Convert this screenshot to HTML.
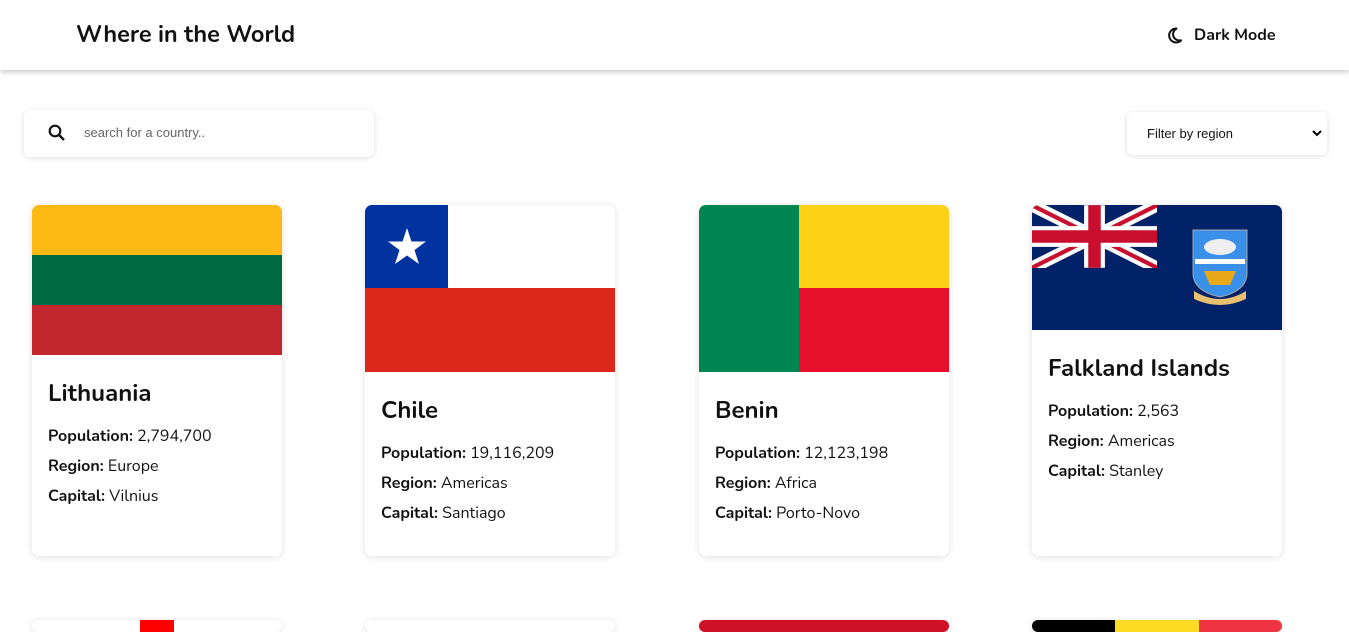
<!DOCTYPE html>
<html><head><meta charset="utf-8"><style>
*{box-sizing:border-box;margin:0;padding:0}
html,body{width:1349px;height:632px;overflow:hidden}
body{background:#fff;font-family:"Nunito","Liberation Sans",sans-serif;color:#111;position:relative}
header{position:absolute;left:0;top:0;width:1349px;height:70px;background:#fff;box-shadow:0 2px 5px rgba(0,0,0,.22);z-index:2}
h1{position:absolute;left:76px;top:19px;font-size:23.5px;font-weight:700;letter-spacing:0}
.dm{position:absolute;left:1168px;top:24px;font-size:16px;font-weight:700;display:flex;align-items:center}
.dm svg{margin-right:11px}
.search{position:absolute;left:24px;top:110px;width:350px;height:47px;border-radius:7px;box-shadow:0 1px 6px rgba(0,0,0,.13);background:#fff}
.search svg{position:absolute;left:24px;top:14px}
.search span{position:absolute;left:60px;top:15px;font-size:13px;color:#666;font-family:"Liberation Sans",sans-serif}
.filter{position:absolute;left:1127px;top:112px;width:200px;height:43px;border-radius:6px;box-shadow:0 1px 6px rgba(0,0,0,.13);background:#fff;font-family:"Liberation Sans",sans-serif;font-size:13px}
.filter span{position:absolute;left:20px;top:14px}
.filter svg{position:absolute;right:4px;top:16px}
.card{position:absolute;width:250px;height:351px;border-radius:7px;background:#fff;box-shadow:0 1px 7px rgba(0,0,0,.13);overflow:hidden}
.card.s{height:12px}
.flag{width:250px;position:relative}
.body{padding:24px 16px}
.body h2{font-size:24px;font-weight:700;margin-bottom:12px;line-height:30px}
.body p{font-size:16px;line-height:30px}
.body b{font-weight:700}
</style></head><body>
<header><h1>Where in the World</h1>
<div class="dm"><svg width="15" height="17" viewBox="0 0 15 17"><path d="M9 1.5A7 7 0 1 0 13.5 13 6 6 0 0 1 9 1.5Z" fill="none" stroke="#111" stroke-width="2"/></svg>Dark Mode</div></header>
<div class="search"><svg width="18" height="18" viewBox="0 0 18 18"><circle cx="7" cy="7" r="5.3" fill="none" stroke="#111" stroke-width="2.2"/><path d="M11 11L16 16" stroke="#111" stroke-width="2.4"/></svg><span>search for a country..</span></div>
<div class="filter"><span>Filter by region</span><svg width="12" height="10" viewBox="0 0 12 10"><path d="M2 3L6 7L10 3" fill="none" stroke="#000" stroke-width="2"/></svg></div>

<div class="card" style="left:32px;top:205px"><div class="flag" style="height:150px;background:linear-gradient(#FDB913 0 50px,#006A44 50px 100px,#C1272D 100px)"></div>
<div class="body"><h2>Lithuania</h2><p><b>Population:</b> 2,794,700</p><p><b>Region:</b> Europe</p><p><b>Capital:</b> Vilnius</p></div></div>

<div class="card" style="left:365px;top:205px"><div class="flag" style="height:167px;background:linear-gradient(#fff 0 83px,#DA291C 83px)"><div style="position:absolute;left:0;top:0;width:83px;height:83px;background:#0033A0"></div><svg style="position:absolute;left:21px;top:21px" width="42" height="42" viewBox="0 0 42 42"><polygon fill="#fff" points="21,2 25.5,15.5 40,15.5 28.5,24 33,38 21,29.5 9,38 13.5,24 2,15.5 16.5,15.5"/></svg></div>
<div class="body"><h2>Chile</h2><p><b>Population:</b> 19,116,209</p><p><b>Region:</b> Americas</p><p><b>Capital:</b> Santiago</p></div></div>

<div class="card" style="left:699px;top:205px"><div class="flag" style="height:167px;background:linear-gradient(#FCD116 0 83px,#E8112D 83px)"><div style="position:absolute;left:0;top:0;width:100px;height:167px;background:#008751"></div></div>
<div class="body"><h2>Benin</h2><p><b>Population:</b> 12,123,198</p><p><b>Region:</b> Africa</p><p><b>Capital:</b> Porto-Novo</p></div></div>

<div class="card" style="left:1032px;top:205px"><div class="flag" style="height:125px;background:#012169"><svg style="position:absolute;left:0;top:0" width="125" height="63" viewBox="0 0 60 30"><path d="M0,0L60,30M60,0L0,30" stroke="#fff" stroke-width="6"/><path d="M0,0L60,30M60,0L0,30" stroke="#C8102E" stroke-width="2"/><path d="M30,0V30M0,15H60" stroke="#fff" stroke-width="10"/><path d="M30,0V30M0,15H60" stroke="#C8102E" stroke-width="6"/></svg>
<svg style="position:absolute;left:160px;top:24px" width="58" height="78" viewBox="0 0 58 78"><path d="M1,1H55V44Q55,62 28,68Q1,62 1,44Z" fill="#3a8fe8" stroke="#aaa"/><ellipse cx="28" cy="18" rx="16" ry="8" fill="#eee"/><rect x="3" y="30" width="50" height="5" fill="#fff"/><path d="M12,42H44L38,56H18Z" fill="#e8a818"/><path d="M2,62Q28,78 54,62L54,70Q28,82 2,70Z" fill="#e8c070"/></svg></div>
<div class="body"><h2>Falkland Islands</h2><p><b>Population:</b> 2,563</p><p><b>Region:</b> Americas</p><p><b>Capital:</b> Stanley</p></div></div>

<div class="card s" style="left:32px;top:620px"><div class="flag" style="height:12px;background:#fff"><div style="position:absolute;left:108px;top:0;width:34px;height:12px;background:#f00"></div></div></div>
<div class="card s" style="left:365px;top:620px"><div class="flag" style="height:12px;background:#fff"></div></div>
<div class="card s" style="left:699px;top:620px"><div class="flag" style="height:12px;background:#CE1126"></div></div>
<div class="card s" style="left:1032px;top:620px"><div class="flag" style="height:12px;background:linear-gradient(90deg,#000 0 83px,#FDDA24 83px 167px,#EF3340 167px)"></div></div>
</body></html>
